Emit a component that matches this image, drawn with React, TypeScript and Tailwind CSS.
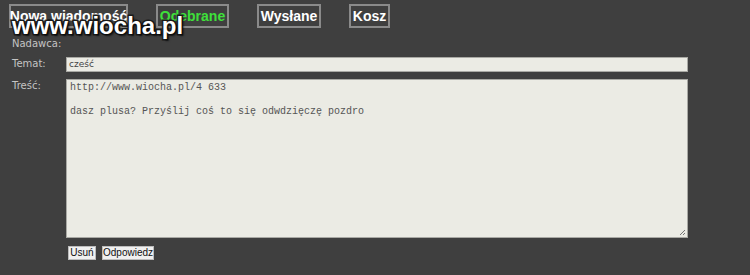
import React from "react";

const tabs = [
  { label: "Nowa wiadomość", w: "w-[119px]", green: false },
  { label: "Odebrane", w: "w-[73px]", green: true },
  { label: "Wysłane", w: "w-[64px]", green: false },
  { label: "Kosz", w: "w-[41px]", green: false },
];

export default function App() {
  return (
    <div className="relative w-[750px] h-[275px] bg-[#3f3f3f] overflow-hidden">
      <div className="flex pl-[9px] pt-[4px] gap-[28px]">
        {tabs.map((t) => (
          <div
            key={t.label}
            className={`${t.w} h-[24px] border-2 border-[#8a8a8a] flex items-center justify-center whitespace-nowrap text-[14px] font-bold ${t.green ? "text-[#3ee03a]" : "text-white"}`}
            style={{ fontFamily: "'Liberation Sans', Arial, sans-serif" }}
          >
            {t.label}
          </div>
        ))}
      </div>
      <div className="flex flex-col pl-[12px] pt-[9px] text-[10px] text-[#c4c4c4]" style={{ fontFamily: "'DejaVu Sans', sans-serif" }}>
        <div className="h-[14px] leading-[14px]">Nadawca:</div>
        <div className="flex mt-[6px] h-[15px]">
          <div className="w-[54px] leading-[14px]">Temat:</div>
          <div className="w-[622px] h-[15px] bg-[#ebebe4] border border-[#a9a9a4] text-[9px] text-[#444] pl-[2px] leading-[13px]">cześć</div>
        </div>
        <div className="flex mt-[7px]">
          <div className="w-[54px] leading-[14px]">Treść:</div>
          <div className="relative w-[622px] h-[159px] bg-[#ebebe4] border border-[#a9a9a4] pl-[3px] pt-[2px] text-[10px] leading-[12px] text-[#555]" style={{ fontFamily: "'Liberation Mono', 'Courier New', monospace" }}>
            <div>http://www.wiocha.pl/4 633</div>
            <div className="h-[12px]" />
            <div>dasz plusa? Przyślij coś to się odwdzięczę pozdro</div>
            <svg className="absolute right-[1px] bottom-[1px]" width="7" height="7" viewBox="0 0 7 7">
              <path d="M6 1 L1 6 M6 4 L4 6" stroke="#777" strokeWidth="1" />
            </svg>
          </div>
        </div>
        <div className="flex gap-[6px] pl-[56px] mt-[8px]">
          <div className="w-[28px] h-[14px] bg-[#f0f0f0] border border-[#bcbcbc] text-[10px] text-[#111] leading-[12px] text-center" style={{ fontFamily: "'Liberation Sans', Arial, sans-serif" }}>Usuń</div>
          <div className="w-[52px] h-[14px] bg-[#f0f0f0] border border-[#bcbcbc] text-[10px] text-[#111] leading-[12px] text-center" style={{ fontFamily: "'Liberation Sans', Arial, sans-serif" }}>Odpowiedz</div>
        </div>
      </div>
      <div
        className="absolute left-[12px] top-[12px] text-[24px] leading-[28px] font-bold text-white"
        style={{
          fontFamily: "'Liberation Sans', Arial, sans-serif",
          WebkitTextStroke: "3px #1a1a1a",
          paintOrder: "stroke fill",
          textShadow: "2px 2px 2px rgba(0,0,0,0.6)",
        }}
      >
        www.wiocha.pl
      </div>
    </div>
  );
}
